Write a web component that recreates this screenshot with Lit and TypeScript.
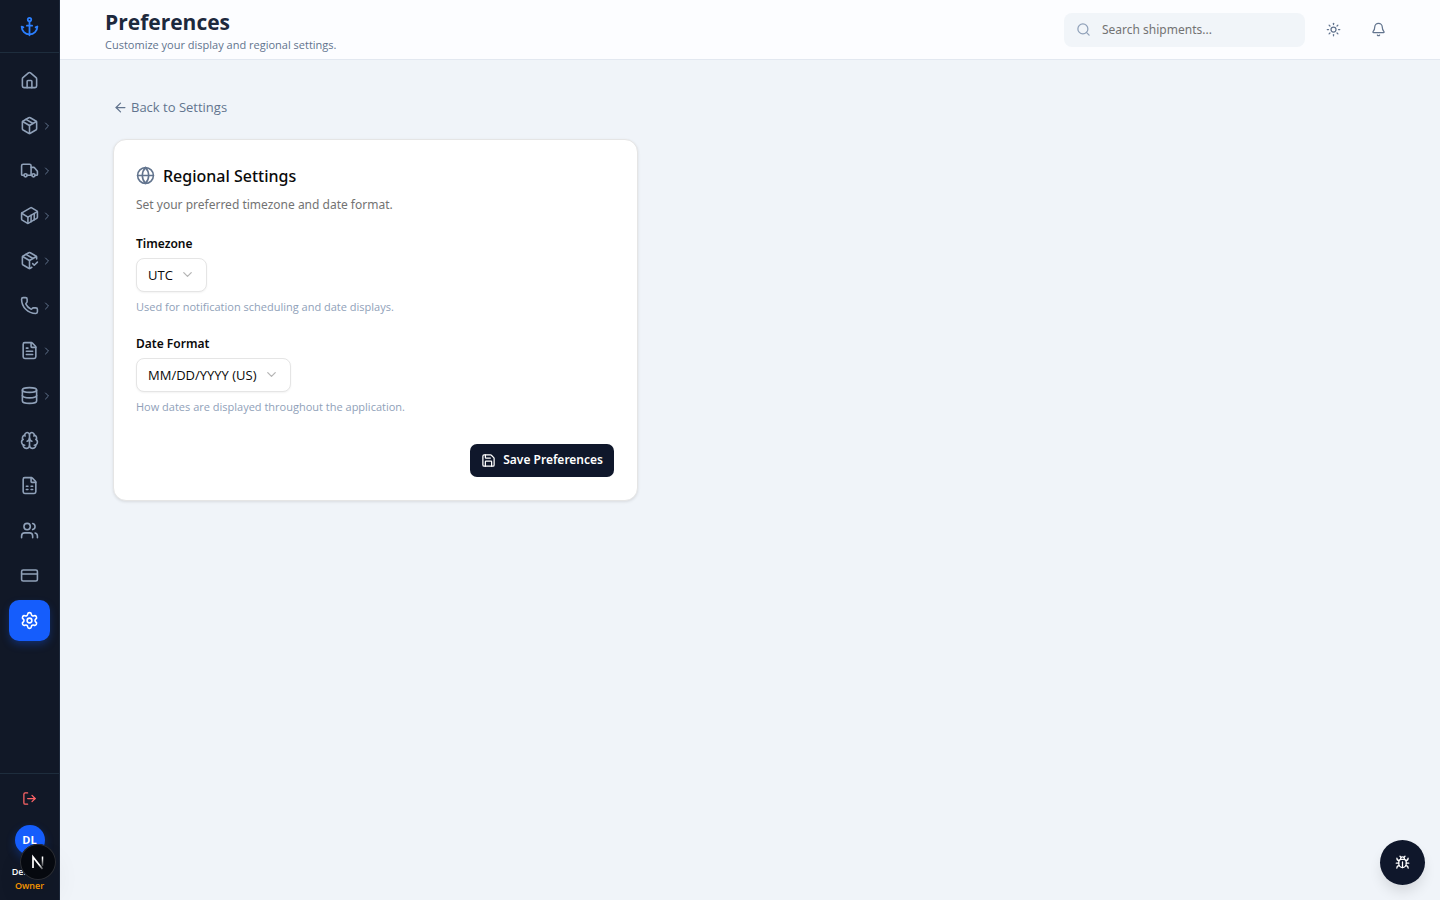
import { LitElement, html, css, svg, type TemplateResult, type SVGTemplateResult } from "lit";
import { customElement, property } from "lit/decorators.js";

const paths = (...ds: string[]): SVGTemplateResult => svg`${ds.map((d) => svg`<path d=${d}></path>`)}`;

const FILE_BASE = [
  "M6 22a2 2 0 0 1-2-2V4a2 2 0 0 1 2-2h8a2.4 2.4 0 0 1 1.704.706l3.588 3.588A2.4 2.4 0 0 1 20 8v12a2 2 0 0 1-2 2z",
  "M14 2v5a1 1 0 0 0 1 1h5",
];

const ICONS: Record<string, SVGTemplateResult> = {
  anchor: svg`${paths("M12 6v16", "m19 13 2-1a9 9 0 0 1-18 0l2 1", "M9 11h6")}<circle cx="12" cy="4" r="2"></circle>`,
  house: paths(
    "M15 21v-8a1 1 0 0 0-1-1h-4a1 1 0 0 0-1 1v8",
    "M3 10a2 2 0 0 1 .709-1.528l7-6a2 2 0 0 1 2.582 0l7 6A2 2 0 0 1 21 10v9a2 2 0 0 1-2 2H5a2 2 0 0 1-2-2z",
  ),
  package: paths(
    "M11 21.73a2 2 0 0 0 2 0l7-4A2 2 0 0 0 21 16V8a2 2 0 0 0-1-1.73l-7-4a2 2 0 0 0-2 0l-7 4A2 2 0 0 0 3 8v8a2 2 0 0 0 1 1.73z",
    "M12 22V12",
    "M3.29 7 12 12l8.71-5",
    "m7.5 4.27 9 5.15",
  ),
  truck: svg`${paths(
    "M14 18V6a2 2 0 0 0-2-2H4a2 2 0 0 0-2 2v11a1 1 0 0 0 1 1h2",
    "M15 18H9",
    "M19 18h2a1 1 0 0 0 1-1v-3.65a1 1 0 0 0-.22-.624l-3.48-4.35A1 1 0 0 0 17.52 8H14",
  )}<circle cx="17" cy="18" r="2"></circle><circle cx="7" cy="18" r="2"></circle>`,
  container: paths(
    "M22 7.7c0-.6-.4-1.2-.8-1.5l-6.3-3.9a1.72 1.72 0 0 0-1.7 0l-10.3 6c-.5.2-.9.8-.9 1.4v6.6c0 .5.4 1.2.8 1.5l6.3 3.9a1.72 1.72 0 0 0 1.7 0l10.3-6c.5-.3.9-1 .9-1.5Z",
    "M10 21.9V14L2.1 9.1",
    "m10 14 11.9-6.9",
    "M14 19.8v-8.1",
    "M18 17.5V9.4",
  ),
  packageCheck: paths(
    "m16 16 2 2 4-4",
    "M21 10V8a2 2 0 0 0-1-1.73l-7-4a2 2 0 0 0-2 0l-7 4A2 2 0 0 0 3 8v8a2 2 0 0 0 1 1.73l7 4a2 2 0 0 0 2 0l2-1.14",
    "m7.5 4.27 9 5.15",
    "M3.29 7 12 12l8.71-5",
    "M12 22V12",
  ),
  phone: paths(
    "M13.832 16.568a1 1 0 0 0 1.213-.303l.355-.465A2 2 0 0 1 17 15h3a2 2 0 0 1 2 2v3a2 2 0 0 1-2 2A18 18 0 0 1 2 4a2 2 0 0 1 2-2h3a2 2 0 0 1 2 2v3a2 2 0 0 1-.8 1.6l-.468.351a1 1 0 0 0-.292 1.233 14 14 0 0 0 6.392 6.384",
  ),
  fileText: paths(...FILE_BASE, "M10 9H8", "M16 13H8", "M16 17H8"),
  database: svg`<ellipse cx="12" cy="5" rx="9" ry="3"></ellipse>${paths("M3 5V19A9 3 0 0 0 21 19V5", "M3 12A9 3 0 0 0 21 12")}`,
  brain: paths(
    "M12 18V5",
    "M15 13a4.17 4.17 0 0 1-3-4 4.17 4.17 0 0 1-3 4",
    "M17.598 6.5A3 3 0 1 0 12 5a3 3 0 1 0-5.598 1.5",
    "M17.997 5.125a4 4 0 0 1 2.526 5.77",
    "M18 18a4 4 0 0 0 2-7.464",
    "M19.967 17.483A4 4 0 1 1 12 18a4 4 0 1 1-7.967-.517",
    "M6 18a4 4 0 0 1-2-7.464",
    "M6.003 5.125a4 4 0 0 0-2.526 5.77",
  ),
  fileSheet: paths(...FILE_BASE, "M8 13h2", "M14 13h2", "M8 17h2", "M14 17h2"),
  users: svg`${paths(
    "M16 21v-2a4 4 0 0 0-4-4H6a4 4 0 0 0-4 4v2",
    "M16 3.128a4 4 0 0 1 0 7.744",
    "M22 21v-2a4 4 0 0 0-3-3.87",
  )}<circle cx="9" cy="7" r="4"></circle>`,
  card: svg`<rect width="20" height="14" x="2" y="5" rx="2"></rect>${paths("M2 10h20")}`,
  settings: svg`${paths(
    "M9.671 4.136a2.34 2.34 0 0 1 4.659 0 2.34 2.34 0 0 0 3.319 1.915 2.34 2.34 0 0 1 2.33 4.033 2.34 2.34 0 0 0 0 3.831 2.34 2.34 0 0 1-2.33 4.033 2.34 2.34 0 0 0-3.319 1.915 2.34 2.34 0 0 1-4.659 0 2.34 2.34 0 0 0-3.32-1.915 2.34 2.34 0 0 1-2.33-4.033 2.34 2.34 0 0 0 0-3.831A2.34 2.34 0 0 1 6.35 6.051a2.34 2.34 0 0 0 3.319-1.915",
  )}<circle cx="12" cy="12" r="3"></circle>`,
  logout: paths("m16 17 5-5-5-5", "M21 12H9", "M9 21H5a2 2 0 0 1-2-2V5a2 2 0 0 1 2-2h4"),
  arrowLeft: paths("m12 19-7-7 7-7", "M19 12H5"),
  search: svg`${paths("m21 21-4.34-4.34")}<circle cx="11" cy="11" r="8"></circle>`,
  sun: svg`<circle cx="12" cy="12" r="4"></circle>${paths(
    "M12 2v2", "M12 20v2", "m4.93 4.93 1.41 1.41", "m17.66 17.66 1.41 1.41",
    "M2 12h2", "M20 12h2", "m6.34 17.66-1.41 1.41", "m19.07 4.93-1.41 1.41",
  )}`,
  bell: paths(
    "M10.268 21a2 2 0 0 0 3.464 0",
    "M3.262 15.326A1 1 0 0 0 4 17h16a1 1 0 0 0 .74-1.673C19.41 13.956 18 12.499 18 8A6 6 0 0 0 6 8c0 4.499-1.411 5.956-2.738 7.326",
  ),
  globe: svg`<circle cx="12" cy="12" r="10"></circle>${paths("M12 2a14.5 14.5 0 0 0 0 20 14.5 14.5 0 0 0 0-20", "M2 12h20")}`,
  save: paths(
    "M15.2 3a2 2 0 0 1 1.4.6l3.8 3.8a2 2 0 0 1 .6 1.4V19a2 2 0 0 1-2 2H5a2 2 0 0 1-2-2V5a2 2 0 0 1 2-2z",
    "M17 21v-7a1 1 0 0 0-1-1H8a1 1 0 0 0-1 1v7",
    "M7 3v4a1 1 0 0 0 1 1h7",
  ),
  bug: paths(
    "M12 20v-9",
    "M14 7a4 4 0 0 1 4 4v3a6 6 0 0 1-12 0v-3a4 4 0 0 1 4-4z",
    "M14.12 3.88 16 2",
    "M21 21a4 4 0 0 0-3.81-4",
    "M21 5a4 4 0 0 1-3.55 3.97",
    "M22 13h-4",
    "M3 21a4 4 0 0 1 3.81-4",
    "M3 5a4 4 0 0 0 3.55 3.97",
    "M6 13H2",
    "m8 2 1.88 1.88",
    "M9 7.13V6a3 3 0 1 1 6 0v1.13",
  ),
  chevronDown: paths("m6 9 6 6 6-6"),
  chevronRight: paths("m9 18 6-6-6-6"),
};

@customElement("app-icon")
export class AppIcon extends LitElement {
  @property() name = "";
  @property({ type: Number }) size = 15;

  static styles = css`
    :host {
      display: inline-flex;
      flex: none;
    }
    .glyph {
      fill: none;
      stroke: currentColor;
      stroke-width: 2;
      stroke-linecap: round;
      stroke-linejoin: round;
    }
  `;

  render(): TemplateResult {
    return html`<svg class="glyph" width=${this.size} height=${this.size} viewBox="0 0 24 24" aria-hidden="true">
      ${ICONS[this.name]}
    </svg>`;
  }
}

interface NavItem {
  icon: string;
  label: string;
  nested?: boolean;
  active?: boolean;
}

const NAV: NavItem[] = [
  { icon: "house", label: "Home" },
  { icon: "package", label: "Shipments", nested: true },
  { icon: "truck", label: "Trucking", nested: true },
  { icon: "container", label: "Containers", nested: true },
  { icon: "packageCheck", label: "Deliveries", nested: true },
  { icon: "phone", label: "Calls", nested: true },
  { icon: "fileText", label: "Documents", nested: true },
  { icon: "database", label: "Data", nested: true },
  { icon: "brain", label: "Insights" },
  { icon: "fileSheet", label: "Reports" },
  { icon: "users", label: "Team" },
  { icon: "card", label: "Billing" },
  { icon: "settings", label: "Settings", active: true },
];

@customElement("app-sidebar")
export class AppSidebar extends LitElement {
  static styles = css`
    :host {
      box-sizing: border-box;
      display: flex;
      flex-direction: column;
      flex: none;
      width: 60px;
      height: 100vh;
      position: sticky;
      top: 0;
      background: #111827;
      border-right: 1px solid #1e293b;
    }
    .brand {
      display: flex;
      align-items: center;
      justify-content: center;
      height: 52px;
      flex: none;
      border-bottom: 1px solid #1e2d3d;
      color: #2b7fff;
    }
    .nav {
      flex: 1;
      min-height: 0;
      display: flex;
      flex-direction: column;
      gap: 4px;
      padding: 7px 9px;
    }
    .item {
      position: relative;
      flex: none;
      display: flex;
      align-items: center;
      justify-content: center;
      height: 41px;
      border-radius: 10px;
      color: #90a1b9;
      text-decoration: none;
    }
    .item.active {
      background: #155dfc;
      color: #fff;
      box-shadow: 0 4px 8px -1px rgba(21, 93, 252, 0.35);
    }
    .more {
      position: absolute;
      right: -3px;
      display: flex;
      color: #62748e;
    }
    .foot {
      flex: none;
      display: flex;
      flex-direction: column;
      align-items: center;
      padding: 8px 4px 7px;
      border-top: 1px solid #1e2d3d;
    }
    .logout {
      display: flex;
      align-items: center;
      justify-content: center;
      width: 41px;
      height: 32px;
      padding: 0;
      border: 0;
      background: none;
      color: #ff6467;
    }
    .avatar {
      display: flex;
      align-items: center;
      justify-content: center;
      width: 30px;
      height: 30px;
      margin: 11px 0 10px;
      border-radius: 50%;
      background: #155dfc;
      color: #fff;
      font-size: 11px;
      font-weight: 700;
      box-shadow: 0 4px 10px rgba(21, 93, 252, 0.3);
    }
    .name,
    .role {
      font-size: 9px;
      line-height: 14px;
      font-weight: 600;
      color: #fff;
    }
    .role {
      color: #fe9a00;
    }
  `;

  render(): TemplateResult {
    return html`
      <div class="brand"><app-icon name="anchor" size="21"></app-icon></div>
      <nav class="nav" aria-label="Main">
        ${NAV.map(
          (n) => html`<a class="item ${n.active ? "active" : ""}" href="#" aria-label=${n.label}>
            <app-icon name=${n.icon} size="19"></app-icon>
            ${n.nested ? html`<span class="more"><app-icon name="chevronRight" size="12"></app-icon></span>` : ""}
          </a>`,
        )}
      </nav>
      <div class="foot">
        <button class="logout" aria-label="Log out"><app-icon name="logout" size="15"></app-icon></button>
        <div class="avatar">DL</div>
        <div class="name">Demo L.</div>
        <div class="role">Owner</div>
      </div>
    `;
  }
}

@customElement("app-root")
export class AppRoot extends LitElement {
  static styles = css`
    :host {
      display: flex;
      min-height: 100vh;
      background: #f0f4f9;
      color: #0a0a0a;
      font-family: "Segoe UI", "Open Sans", "Noto Sans", sans-serif;
      font-size: 13px;
      line-height: 20px;
    }
    .page {
      flex: 1;
      min-width: 0;
    }
    .top {
      box-sizing: border-box;
      display: flex;
      align-items: center;
      justify-content: space-between;
      height: 60px;
      padding: 0 45px;
      background: #fcfdff;
      border-bottom: 1px solid #e2e8f0;
    }
    .title {
      margin: 0;
      font-size: 21px;
      line-height: 30px;
      font-weight: 700;
      color: #1d293d;
    }
    .sub {
      margin: 0;
      font-size: 11px;
      line-height: 15px;
      color: #62748e;
    }
    .tools {
      display: flex;
      align-items: center;
      gap: 11px;
      color: #62748e;
    }
    .search {
      box-sizing: border-box;
      display: flex;
      align-items: center;
      gap: 11px;
      width: 241px;
      height: 34px;
      padding: 0 12px;
      border-radius: 8px;
      background: #f1f5f9;
      color: #90a1b9;
    }
    .search input {
      flex: 1;
      min-width: 0;
      padding: 0;
      border: 0;
      outline: 0;
      background: none;
      font: 12px/20px "Noto Sans", sans-serif;
      color: #0f172b;
    }
    .search input::placeholder {
      color: #737373;
    }
    .tool {
      display: flex;
      align-items: center;
      justify-content: center;
      width: 34px;
      height: 34px;
      padding: 0;
      border: 0;
      background: none;
      color: inherit;
    }
    .main {
      padding: 37px 53px;
    }
    .back {
      display: inline-flex;
      align-items: center;
      gap: 3px;
      color: #62748e;
      text-decoration: none;
    }
    .card {
      box-sizing: border-box;
      max-width: 525px;
      margin-top: 19px;
      padding: 23px 23px 23px 22px;
      border: 1px solid #e5e5e5;
      border-radius: 13px;
      background: #fff;
      box-shadow: 0 1px 3px rgba(0, 0, 0, 0.1);
    }
    .heading {
      display: flex;
      align-items: center;
      gap: 8px;
      margin: 0;
      font-family: "Noto Sans", sans-serif;
      font-size: 16px;
      line-height: 26px;
      font-weight: 500;
    }
    .heading app-icon {
      color: #62748e;
    }
    .lead {
      margin: 6px 0 19px;
      font-family: "Noto Sans", sans-serif;
      font-size: 12px;
      color: #737373;
    }
    .field {
      display: flex;
      flex-direction: column;
      align-items: flex-start;
      margin-bottom: 20px;
    }
    .label {
      font-family: "Noto Sans", sans-serif;
      font-size: 12px;
      font-weight: 600;
    }
    .select {
      position: relative;
      display: flex;
      align-items: center;
      margin: 4px 0 7px;
    }
    .select select {
      appearance: none;
      field-sizing: content;
      box-sizing: border-box;
      height: 34px;
      padding: 0 33px 0 11px;
      border: 1px solid #e5e5e5;
      border-radius: 8px;
      background: #fff;
      box-shadow: 0 1px 2px rgba(0, 0, 0, 0.05);
      color: #0a0a0a;
      font: inherit;
    }
    .select app-icon {
      position: absolute;
      right: 12px;
      color: #b5b5b5;
      pointer-events: none;
    }
    .hint {
      margin: 0;
      font-size: 11px;
      line-height: 15px;
      color: #90a1b9;
    }
    .actions {
      display: flex;
      justify-content: flex-end;
      padding-top: 10px;
    }
    .save {
      display: flex;
      align-items: center;
      gap: 7px;
      height: 33px;
      padding: 0 11px;
      border: 0;
      border-radius: 7px;
      background: #0f172b;
      color: #fff;
      font: 600 12px/20px "Noto Sans", sans-serif;
    }
    .bug {
      position: fixed;
      right: 15px;
      bottom: 15px;
      display: flex;
      align-items: center;
      justify-content: center;
      width: 45px;
      height: 45px;
      padding: 0;
      border: 0;
      border-radius: 50%;
      background: #0f172b;
      color: #fff;
      box-shadow: 0 8px 14px -2px rgba(0, 0, 0, 0.12);
    }
    .dev {
      position: fixed;
      left: 20px;
      bottom: 20px;
      width: 36px;
      height: 36px;
      padding: 0;
      border: 0;
      border-radius: 50%;
      background: #06090f;
      box-shadow: inset 0 0 0 1px #2b2e35, 0 16px 32px -8px rgba(0, 0, 0, 0.24);
    }
    .dev svg {
      display: block;
    }
  `;

  render(): TemplateResult {
    return html`
      <app-sidebar></app-sidebar>
      <div class="page">
        <header class="top">
          <div>
            <h1 class="title">Preferences</h1>
            <p class="sub">Customize your display and regional settings.</p>
          </div>
          <div class="tools">
            <label class="search">
              <app-icon name="search" size="15"></app-icon>
              <input type="search" placeholder="Search shipments..." aria-label="Search shipments" />
            </label>
            <button class="tool" aria-label="Toggle theme"><app-icon name="sun" size="15"></app-icon></button>
            <button class="tool" aria-label="Notifications"><app-icon name="bell" size="15"></app-icon></button>
          </div>
        </header>
        <main class="main">
          <a class="back" href="#"><app-icon name="arrowLeft" size="15"></app-icon>Back to Settings</a>
          <section class="card">
            <h2 class="heading"><app-icon name="globe" size="19"></app-icon>Regional Settings</h2>
            <p class="lead">Set your preferred timezone and date format.</p>
            <div class="field">
              <label class="label" for="tz">Timezone</label>
              <div class="select">
                <select id="tz"><option>UTC</option></select>
                <app-icon name="chevronDown" size="15"></app-icon>
              </div>
              <p class="hint">Used for notification scheduling and date displays.</p>
            </div>
            <div class="field">
              <label class="label" for="df">Date Format</label>
              <div class="select">
                <select id="df"><option>MM/DD/YYYY (US)</option></select>
                <app-icon name="chevronDown" size="15"></app-icon>
              </div>
              <p class="hint">How dates are displayed throughout the application.</p>
            </div>
            <div class="actions">
              <button class="save"><app-icon name="save" size="15"></app-icon>Save Preferences</button>
            </div>
          </section>
        </main>
      </div>
      <button class="bug" aria-label="Report a bug"><app-icon name="bug" size="15"></app-icon></button>
      <button class="dev" aria-label="Developer tools">
        <svg width="36" height="36" viewBox="0 0 36 36" fill="none" stroke-width="2">
          <defs>
            <linearGradient id="fadeDiag" x1="13" y1="12" x2="24" y2="26" gradientUnits="userSpaceOnUse">
              <stop offset="0.6" stop-color="#fff"></stop>
              <stop offset="1" stop-color="#fff" stop-opacity="0.1"></stop>
            </linearGradient>
            <linearGradient id="fadeStem" x1="0" y1="12" x2="0" y2="24" gradientUnits="userSpaceOnUse">
              <stop offset="0.2" stop-color="#fff"></stop>
              <stop offset="1" stop-color="#fff" stop-opacity="0"></stop>
            </linearGradient>
          </defs>
          <path d="M13 24V13L22.5 25" stroke="url(#fadeDiag)" stroke-width="1.7"></path>
          <path d="M22.5 12.5V22" stroke="url(#fadeStem)" stroke-width="1.5"></path>
        </svg>
      </button>
    `;
  }
}
